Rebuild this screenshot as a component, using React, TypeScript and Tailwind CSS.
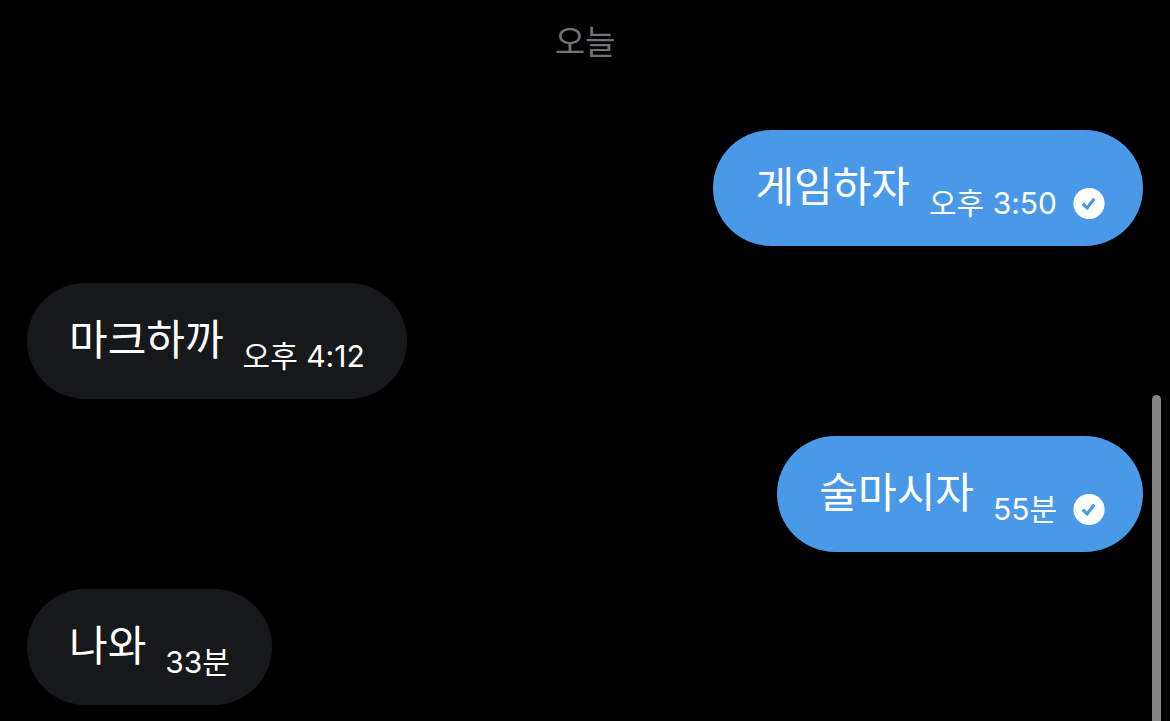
type Message = { text: string; time: string; mine: boolean };

const messages: Message[] = [
  { text: "게임하자", time: "오후 3:50", mine: true },
  { text: "마크하까", time: "오후 4:12", mine: false },
  { text: "술마시자", time: "55분", mine: true },
  { text: "나와", time: "33분", mine: false },
];

function ReadMark() {
  return (
    <svg viewBox="0 0 32 32" className="ml-4 size-8" role="img" aria-label="읽음">
      <circle cx="16" cy="15.5" r="15.6" fill="#fff" />
      <path d="M9.8 15.6l4.2 4.4 7.2-9.2" fill="none" stroke="#4a99e9" strokeWidth="3.2" strokeLinejoin="round" />
    </svg>
  );
}

function Bubble({ text, time, mine }: Message) {
  return (
    <li
      className={
        mine
          ? "flex h-29 items-center self-end rounded-full bg-[#4a99e9] pr-[38px] pl-[42px] text-white"
          : "flex h-29 items-center self-start rounded-full bg-[#16181a] pr-[42px] pl-[42px] text-white"
      }
    >
      <p className="pb-0.5 text-[42px] leading-[60px]">{text}</p>
      <div className="ml-[19px] flex items-center pt-8">
        <time className="pb-0.5 text-[30px] leading-8">{time}</time>
        {mine && <ReadMark />}
      </div>
    </li>
  );
}

export default function App() {
  return (
    <main className="flex h-screen overflow-hidden bg-black font-['Inter','Noto_Sans_CJK_KR',sans-serif]">
      <section className="flex grow flex-col pl-[27px]">
        <h1 className="pt-5 pb-[66px] text-center text-[33px] leading-11 text-[#717275]">오늘</h1>
        <ol className="flex flex-col gap-[37px]">
          {messages.map((message) => (
            <Bubble key={message.text} {...message} />
          ))}
        </ol>
      </section>
      <div className="mt-[395px] mr-[9px] ml-[9px] w-[9px] rounded-t-full bg-[#848484]" />
    </main>
  );
}
